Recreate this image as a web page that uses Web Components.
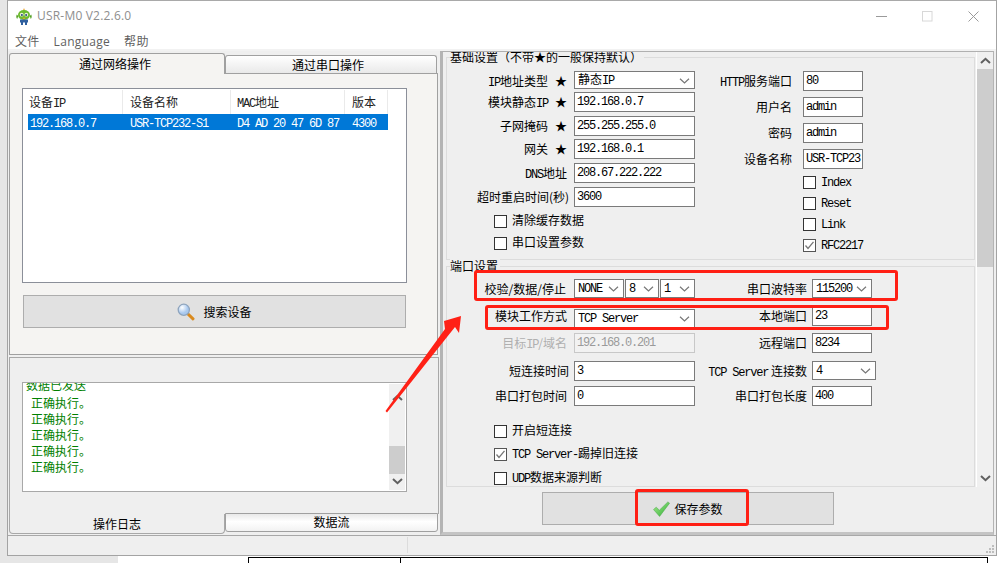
<!DOCTYPE html>
<html lang="zh">
<head>
<meta charset="utf-8">
<title>USR-M0 V2.2.6.0</title>
<style>
html,body{margin:0;padding:0;background:#fff}
body{width:1004px;height:563px;overflow:hidden;position:relative;font:12px/16px "Noto Sans CJK SC","Noto Sans",sans-serif;color:#000}
</style>
</head>
<body>
<usr-backdrop>
  <usr-window>
    <title-bar>USR-M0 V2.2.6.0</title-bar>
    <menu-bar><span>文件</span><span>Language</span><span>帮助</span></menu-bar>
    <work-area>
      <left-column>
        <net-panel></net-panel>
        <log-panel></log-panel>
      </left-column>
      <settings-panel>
        <group-box title="基础设置（不带★的一般保持默认）" style="height:203px">
          <div style="display:flex">
            <form-col style="width:248px">
              <f-row lw="120" style="margin-top:13px;height:18px"><span slot="label"><l-t>IP</l-t>地址类型<star-mark></star-mark></span><f-select w="121" h="18" cjk>静态<l-t>IP</l-t></f-select></f-row>
              <f-row lw="120" style="margin-top:3px;height:20px"><span slot="label">模块静态<l-t>IP</l-t><star-mark></star-mark></span><f-input w="121">192.168.0.7</f-input></f-row>
              <f-row lw="120" style="margin-top:4px;height:20px"><span slot="label">子网掩码<star-mark></star-mark></span><f-input w="121">255.255.255.0</f-input></f-row>
              <f-row lw="120" style="margin-top:3px;height:20px"><span slot="label">网关<star-mark></star-mark></span><f-input w="121">192.168.0.1</f-input></f-row>
              <f-row lw="120" style="margin-top:4px;height:20px"><span slot="label"><l-t>DNS</l-t>地址</span><f-input w="121">208.67.222.222</f-input></f-row>
              <f-row lw="120" style="margin-top:4px;height:20px"><span slot="label" style="margin-right:-2px">超时重启时间(秒)</span><f-input w="121">3600</f-input></f-row>
              <f-check style="margin:8px 0 0 47px">清除缓存数据</f-check>
              <f-check style="margin:9px 0 0 47px">串口设置参数</f-check>
            </form-col>
            <form-col>
              <f-row lw="97" gap="11" style="margin-top:13px;height:20px"><span slot="label"><l-t>HTTP</l-t>服务端口</span><f-input w="60">80</f-input></f-row>
              <f-row lw="97" gap="11" style="margin-top:6px;height:20px"><span slot="label">用户名</span><f-input w="60">admin</f-input></f-row>
              <f-row lw="97" gap="11" style="margin-top:6px;height:20px"><span slot="label">密码</span><f-input w="60">admin</f-input></f-row>
              <f-row lw="97" gap="11" style="margin-top:6px;height:20px"><span slot="label">设备名称</span><f-input w="60">USR-TCP23</f-input></f-row>
              <f-check style="margin:7px 0 0 108px"><l-t>Index</l-t></f-check>
              <f-check style="margin:8px 0 0 108px"><l-t>Reset</l-t></f-check>
              <f-check style="margin:8px 0 0 108px"><l-t>Link</l-t></f-check>
              <f-check checked style="margin:8px 0 0 108px"><l-t>RFC2217</l-t></f-check>
            </form-col>
          </div>
        </group-box>
        <group-box title="端口设置" style="height:221px;margin-top:6px">
          <split-row style="margin-top:12px;height:20px">
            <f-row lw="120"><span slot="label" style="margin-right:1px">校验/数据/停止</span><select-set><f-select w="50" h="19"><l-t>NONE</l-t></f-select><f-select w="34" h="19">8</f-select><f-select w="35" h="19">1</f-select></select-set></f-row>
            <f-row lw="112" gap="5" slot="right"><span slot="label">串口波特率</span><f-select w="60" h="19">115200</f-select></f-row>
          </split-row>
          <split-row style="margin-top:7px;height:20px">
            <f-row lw="120"><span slot="label">模块工作方式</span><f-select w="121" h="19" style="margin-top:3px"><l-t>TCP Server</l-t></f-select></f-row>
            <f-row lw="112" gap="5" slot="right"><span slot="label">本地端口</span><f-input w="60">23</f-input></f-row>
          </split-row>
          <split-row style="margin-top:7px;height:20px">
            <f-row lw="120"><span slot="label" style="color:#b0b0b0">目标<l-t>IP</l-t>/域名</span><f-input w="121" disabled>192.168.0.201</f-input></f-row>
            <f-row lw="112" gap="5" slot="right"><span slot="label">远程端口</span><f-input w="60">8234</f-input></f-row>
          </split-row>
          <split-row style="margin-top:8px;height:20px">
            <f-row lw="120"><span slot="label" style="margin-right:-2px">短连接时间</span><f-input w="121">3</f-input></f-row>
            <f-row lw="112" gap="5" slot="right"><span slot="label"><l-t>TCP Server</l-t> 连接数</span><f-select w="64" h="19">4</f-select></f-row>
          </split-row>
          <split-row style="margin-top:5px;height:20px">
            <f-row lw="120"><span slot="label">串口打包时间</span><f-input w="121">0</f-input></f-row>
            <f-row lw="112" gap="5" slot="right"><span slot="label">串口打包长度</span><f-input w="60">400</f-input></f-row>
          </split-row>
          <f-check style="margin:19px 0 0 47px">开启短连接</f-check>
          <f-check checked style="margin:10px 0 0 47px"><l-t>TCP Server-</l-t>踢掉旧连接</f-check>
          <f-check style="margin:11px 0 0 47px"><l-t>UDP</l-t>数据来源判断</f-check>
        </group-box>
        <flat-button slot="footer" icon="check" style="width:292px;margin:5px 0 0 99px;gap:4px">保存参数</flat-button>
      </settings-panel>
    </work-area>
    <status-bar></status-bar>
  </usr-window>
  <mark-up></mark-up>
</usr-backdrop>

<script>
const def=(name,css,html,init)=>{
  customElements.define(name,class extends HTMLElement{
    constructor(){super();const s=this.attachShadow({mode:'open'});
      s.innerHTML='<style>'+css+'</style>'+(typeof html==='function'?html(this):html);}
    connectedCallback(){if(this._b)return;this._b=1;
      if(typeof html==='function')this.shadowRoot.innerHTML='<style>'+css+'</style>'+html(this);
      if(init)init(this);}
  });
};
const CHEV=`<svg width="11" height="6" viewBox="0 0 11 6"><path d="M1 .8 5.5 5 10 .8" fill="none" stroke="#777" stroke-width="1.2"/></svg>`;
const ARR=(d)=>`<svg width="11" height="7" viewBox="0 0 11 7"><path d="${d}" fill="none" stroke="#606060" stroke-width="2"/></svg>`;

def('l-t',':host{font:12px/16px "Liberation Mono",monospace;letter-spacing:-1.2px}','<slot></slot>');
def('star-mark',':host{margin-left:7px;display:inline-block;width:12px;text-align:center}','★');

def('usr-backdrop',`:host{display:block;position:relative;width:1004px;height:563px;overflow:hidden;background:#fff}
 .left{position:absolute;left:0;top:0;width:7px;height:563px;background:#e6e6e6}
 .bottom{position:absolute;left:0;top:555px;width:118px;height:8px;background:#e6e6e6}
 .h{position:absolute;left:248px;top:557px;width:739px;height:1px;background:#000}
 .v{position:absolute;top:557px;width:1px;height:6px;background:#000}
 .t{position:absolute;top:0;width:1px;height:1px;background:#333}
 `,`<div class="left"></div><div class="bottom"></div><div class="h"></div>
 <div class="v" style="left:248px"></div><div class="v" style="left:400px"></div><div class="v" style="left:987px"></div>
 <div class="t" style="left:247px"></div><div class="t" style="left:979px"></div>
 <slot></slot>`);

def('usr-window',`:host{display:flex;flex-direction:column;position:relative;margin-left:7px;width:990px;height:556px;box-sizing:border-box;border:1px solid #a3a3a3;border-top-color:#a9a9a9;background:#efefef}`,'<slot></slot>');

def('title-bar',`:host{display:flex;align-items:center;height:30px;background:#fff;flex:none;color:#8e8e8e;font:12px/16px "Open Sans",sans-serif;letter-spacing:.2px}
 .logo{margin:0 5px 0 8px;flex:none}
 .sp{flex:1}
 .btn{width:46px;height:30px;display:flex;align-items:center;justify-content:center}
 `,`<svg class="logo" width="16" height="17" viewBox="0 0 16 17">
   <path d="M8 0 9 2.5 7 2.5Z" fill="#e8a020"/>
   <ellipse cx="8" cy="7" rx="6" ry="5" fill="#6cbb2c"/>
   <path d="M.8 6.5c-.8 1.500-.6 3.500.4 4.500l1-3zM15.200 6.500c.8 1.500.6 3.500-.4 4.500l-1-3z" fill="#4f9e1e"/>
   <circle cx="5.700" cy="6.700" r="1.900" fill="#e7f2d5"/><circle cx="10.300" cy="6.700" r="1.900" fill="#e7f2d5"/>
   <circle cx="5.900" cy="6.900" r="1" fill="#274a7a"/><circle cx="10.100" cy="6.900" r="1" fill="#274a7a"/>
   <path d="M4 11.500h8v3H11v2.500H9v-2.500H7v2.500H5v-2.500H4z" fill="#2f5f9e"/>
   <path d="M6.300 9.800h3.400l-1.700 1.500z" fill="#f0a72c"/>
 </svg><slot></slot><div class="sp"></div>
 <div class="btn"><svg width="11" height="11"><path d="M0 5.500h11" stroke="#9a9a9a"/></svg></div>
 <div class="btn"><svg width="11" height="11"><rect x=".5" y=".5" width="9.500" height="9.500" fill="none" stroke="#d8d8d8"/></svg></div>
 <div class="btn"><svg width="11" height="11"><path d="M.5.500l10 10M10.500.500l-10 10" stroke="#9a9a9a"/></svg></div>`);

def('menu-bar',`:host{display:flex;align-items:center;height:18px;box-sizing:border-box;padding:3px 0 0 7px;background:#fff;flex:none;gap:14px;color:#5f5f5f;font:12px/15px "Open Sans","Noto Sans CJK SC",sans-serif;letter-spacing:.3px}
 ::slotted(span){display:block}`,'<slot></slot>');

def('work-area',`:host{display:flex;flex:1;min-height:0;border-top:2px solid #f2f2f2}`,'<slot></slot>');
def('left-column',`:host{display:flex;flex-direction:column;width:431px;padding:2px 0 0 1px;box-sizing:border-box;flex:none}`,'<slot></slot>');

def('tab-head',`:host{display:flex;align-items:center;justify-content:center;box-sizing:border-box;font:12px/16px "Noto Sans CJK SC",sans-serif;color:#000}`,'<slot></slot>');

def('net-panel',`:host{display:block;height:302px;width:429px;flex:none;position:relative}
 .tabs{display:flex;height:20px;align-items:flex-end}
 .a{width:216px;background:#f5f4f2;border:1px solid #a0a0a0;border-bottom:0;border-radius:3px 3px 0 0;box-sizing:border-box;position:relative;z-index:1;margin-bottom:-1px;height:21px;padding-right:4px}
 .b{width:212px;height:18px;background:linear-gradient(#fff,#e9e9e9);border:1px solid #a0a0a0;border-bottom:0;border-radius:3px 3px 0 0;box-sizing:border-box;padding-right:6px}
 .pane{height:282px;box-sizing:border-box;background:#f5f4f2;border:1px solid #a0a0a0;padding:14px 12px 0 12px}
 .list{height:195px;width:385px;box-sizing:border-box;border:1px solid #8b8f99;background:#fff;padding:1px 0 0 5px}
 .hd,.row{display:grid;grid-template-columns:95px 108px 114px 43px;width:360px}
 .hd{height:24px}
 .hd div{border-right:1px solid #eaeaea;padding-left:1px;line-height:24px;white-space:nowrap;color:#222}
 .hd div:nth-child(2),.hd div:nth-child(4){padding-left:7px}
 .hd div:nth-child(3){padding-left:6px}
 .row{background:#0078d7;color:#fff;height:16px;line-height:16px}
 .row div{padding-left:2px;white-space:nowrap}
 .row div:nth-child(2),.row div:nth-child(4){padding-left:7px}
 .row div:nth-child(3){padding-left:6px}
 flat-button{width:383px;margin:12px 0 0 1px}
 `,`<div class="tabs"><tab-head class="a">通过网络操作</tab-head><tab-head class="b">通过串口操作</tab-head></div>
 <div class="pane"><div class="list">
  <div class="hd"><div>设备<l-t>IP</l-t></div><div>设备名称</div><div><l-t>MAC</l-t>地址</div><div>版本</div></div>
  <div class="row"><div><l-t>192.168.0.7</l-t></div><div><l-t>USR-TCP232-S1</l-t></div><div><l-t>D4 AD 20 47 6D 87</l-t></div><div><l-t>4300</l-t></div></div>
 </div><flat-button icon="search">搜索设备</flat-button></div>`);

def('flat-button',`:host{display:flex;height:33px;box-sizing:border-box;background:#e1e1e1;border:1px solid #adadad;align-items:center;justify-content:center;gap:8px;font:12px/16px "Noto Sans CJK SC",sans-serif;color:#000;flex:none}
 svg{flex:none}`,el=>{
   const search=`<svg width="18" height="18" viewBox="0 0 18 18"><defs><radialGradient id="g" cx=".35" cy=".3"><stop offset="0" stop-color="#fff"/><stop offset="1" stop-color="#a9c9ef"/></radialGradient></defs>
    <path d="M10.500 10.500 16 15.800" stroke="#d98a1e" stroke-width="3" stroke-linecap="round"/><circle cx="6.800" cy="6.800" r="5.600" fill="url(#g)" stroke="#8ea4bd" stroke-width="1.300"/></svg>`;
   const check=`<svg width="17" height="16" viewBox="0 0 16 15"><defs><linearGradient id="c" x1="0" y1="0" x2="1" y2="1"><stop offset="0" stop-color="#a6ec8c"/><stop offset="1" stop-color="#2fae36"/></linearGradient></defs>
    <path d="M.5 8 3 5.800 6 8.600 14 .8 15.600 2 6.200 14.500Z" fill="url(#c)" stroke="#4aa94a" stroke-width=".5"/></svg>`;
   return (el.getAttribute('icon')==='search'?search:check)+'<slot></slot>';
 });

def('log-panel',`:host{display:block;height:177px;width:430px;flex:none;margin-top:2px;position:relative}
 .pane{height:157px;box-sizing:border-box;border:1px solid #a8a8a8;border-bottom:0;background:#efefef;padding:24px 0 0 12px}
 .box{height:110px;width:385px;box-sizing:border-box;border:1px solid #a8a8a8;background:#fff;display:flex;position:relative}
 .txt{flex:1;overflow:hidden;color:#008000;padding-left:8px;position:relative}
 .cutw{position:absolute;left:1px;top:0;height:10px;overflow:hidden;width:80px}
 .cutw div{margin-top:-6px;line-height:16px}
 .ln{height:16px;line-height:16px}
 .lines{margin-top:12px}
 .sb{width:16px;margin:1px 1px 1px 0;background:#f0f0f0;display:flex;flex-direction:column;align-items:center}
 .up{height:18px;display:flex;align-items:center;justify-content:center;margin-top:4px}
 .tr{flex:1;position:relative;width:100%}
 .th{position:absolute;left:0;right:0;top:40px;height:28px;background:#cdcdcd}
 .dn{height:18px;display:flex;align-items:center;justify-content:center}
 .tabs{display:flex;height:20px}
 .a{width:216px;height:20px;border:1px solid #a8a8a8;border-top:0;border-radius:0 0 4px 4px;box-sizing:border-box;background:#efefef}
 .b{width:213px;height:19px;background:linear-gradient(#e9e9e9 0,#fff 45%,#f2f2f2);border:1px solid #a0a0a0;border-radius:0 0 3px 3px;box-sizing:border-box;margin-top:-1px;padding-bottom:2px}
 `,`<div class="pane"><div class="box"><div class="txt">
   <div class="cutw" style="padding-left:2px"><div>数据已发送</div></div>
   <div class="lines"><div class="ln">正确执行。</div><div class="ln">正确执行。</div><div class="ln">正确执行。</div><div class="ln">正确执行。</div><div class="ln">正确执行。</div></div>
  </div><div class="sb"><div class="up">${ARR('M1 6 5.500 1.800 10 6')}</div><div class="tr"><div class="th"></div></div><div class="dn">${ARR('M1 1 5.500 5.200 10 1')}</div></div></div></div>
  <div class="tabs"><tab-head class="a">操作日志</tab-head><tab-head class="b">数据流</tab-head></div>`);

def('settings-panel',`:host{display:flex;flex-direction:column;flex:1;min-width:0;border-left:3px solid #b4b4b4;margin-left:1px;border-right:1px solid #b4b4b4;margin-right:2px;border-bottom:3px solid #c4c4c4;border-top:1px solid #b0b0b0;height:484px;box-sizing:border-box}
 .scroll{height:435px;display:flex;flex:none}
 .inner{flex:1;min-width:0;padding:5px 1px 0 3px;overflow:hidden}
 .sb{width:16px;background:#f0f0f0;display:flex;flex-direction:column;border-left:1px solid #fff;flex:none}
 .up{height:17px;display:flex;align-items:center;justify-content:center}
 .th{height:198px;background:#cdcdcd}
 .sp{flex:1}
 .dn{height:18px;display:flex;align-items:center;justify-content:center}
 `,`<div class="scroll"><div class="inner"><slot></slot></div><div class="sb"><div class="up">${ARR('M1 6 5.500 1.800 10 6')}</div><div class="th"></div><div class="sp"></div><div class="dn">${ARR('M1 1 5.500 5.200 10 1')}</div></div></div><slot name="footer"></slot>`);

def('group-box',`:host{display:block;box-sizing:border-box;border:1px solid #dcdcdc;position:relative;width:529px}
 .t{position:absolute;left:3px;top:-9px;background:#efefef;padding-right:2px;line-height:16px;white-space:nowrap}`,
 el=>`<div class="t">${el.getAttribute('title')}</div><slot></slot>`);

def('form-col',`:host{display:block;flex:none}`,'<slot></slot>');
def('select-set',`:host{display:flex;gap:1px}`,'<slot></slot>');
def('split-row',`:host{display:flex}
 .l{width:248px;flex:none}`,'<div class="l"><slot></slot></div><slot name="right"></slot>');

def('f-row',`:host{display:flex;align-items:flex-start;white-space:nowrap}
 .lab{flex:none;text-align:right;line-height:20px;box-sizing:border-box}`,
 el=>`<div class="lab" style="width:${+el.getAttribute('lw')}px;margin-right:${el.getAttribute('gap')||7}px"><slot name="label"></slot></div><slot></slot>`);

def('f-input',`:host{display:block;box-sizing:border-box;height:20px;border:1px solid #7a7a7a;background:#fff;padding:1px 0 0 2px;white-space:nowrap;overflow:hidden;font:12px/17px "Liberation Mono",monospace;letter-spacing:-1.2px;flex:none}
 :host([disabled]){background:#f2f2f2;border-color:#c8c8c8;color:#9a9a9a}`,
 el=>{el.style.width=el.getAttribute('w')+'px';return '<slot></slot>';});

def('f-select',`:host{display:flex;align-items:center;box-sizing:border-box;border:1px solid #7a7a7a;background:#fff;padding-left:3px;white-space:nowrap;overflow:hidden;font:12px/16px "Liberation Mono","Noto Sans CJK SC",monospace;letter-spacing:-1.2px;flex:none}
 :host([cjk]){font-family:"Noto Sans CJK SC",sans-serif;letter-spacing:0}
 .t{flex:1;min-width:0;overflow:hidden}
 svg{flex:none;margin:1px 4px 0 2px}`,
 el=>{el.style.width=el.getAttribute('w')+'px';el.style.height=el.getAttribute('h')+'px';return `<div class="t"><slot></slot></div>${CHEV}`;});

def('f-check',`:host{display:flex;align-items:flex-start;height:13px;gap:5px;white-space:nowrap;line-height:14px}
 .b{width:13px;height:13px;box-sizing:border-box;border:1px solid #333;background:#fff;flex:none;display:flex}
 :host([checked]) .b{border-color:#555}
 .t{margin-top:-2px}`,
 el=>`<div class="b">${el.hasAttribute('checked')?'<svg width="11" height="11" viewBox="0 0 11 11"><path d="M1.500 5.500 4 8.500 9.500 1.800" fill="none" stroke="#777" stroke-width="1.300"/></svg>':''}</div><div class="t"><slot></slot></div>`);

def('status-bar',`:host{display:block;height:19px;flex:none;border-top:1px solid #a8a8a8;background:#efefef;position:relative;box-sizing:content-box}
 .d{position:absolute;left:399px;top:1px;width:1px;height:16px;background:#dcdcdc}
 svg{position:absolute;right:1px;bottom:1px}`,`<div class="d"></div><svg width="10" height="10" viewBox="0 0 10 10" fill="#bdbdbd"><rect x="7" y="1" width="2" height="2"/><rect x="4" y="4" width="2" height="2"/><rect x="7" y="4" width="2" height="2"/><rect x="1" y="7" width="2" height="2"/><rect x="4" y="7" width="2" height="2"/><rect x="7" y="7" width="2" height="2"/></svg>`);

def('mark-up',`:host{position:absolute;left:0;top:0;width:1004px;height:563px;pointer-events:none;display:block}
 .r{position:absolute;box-sizing:border-box;border:3px solid #ff1f14;border-radius:3px}
 svg{position:absolute;left:0;top:0}`,
 `<div class="r" style="left:474px;top:270px;width:424px;height:31px"></div>
  <div class="r" style="left:485px;top:305px;width:404px;height:25px"></div>
  <div class="r" style="left:635px;top:489px;width:114px;height:37px"></div>
  <svg width="1004" height="563"><path d="M385.500 411 445 329 444 321 461 316 459 333 455 327 387 412.500Z" fill="#ff2116"/></svg>`);
</script>
</body>
</html>
